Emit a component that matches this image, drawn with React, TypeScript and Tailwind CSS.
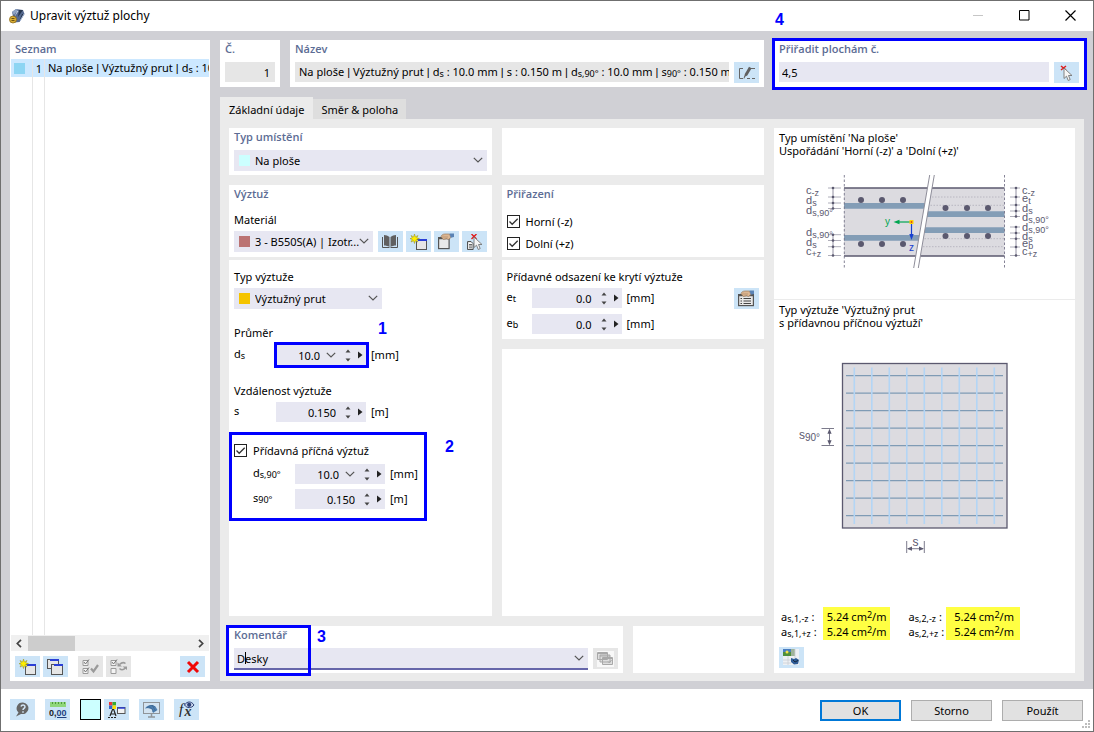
import { useState } from "react";
import type { ReactNode } from "react";

/* ---------- small drawings ---------- */

const Chevron = () => (
  <svg width="10" height="6" viewBox="0 0 10 6" fill="none" stroke="#555" strokeWidth="1.2">
    <path d="M.8.8 5 5 9.2.8" />
  </svg>
);

const AppLogo = () => (
  <svg width="16" height="16" viewBox="0 0 16 16">
    <path d="M3 4 7 1l7 1 1.500 4-5 8-5 .5z" fill="#55698f" />
    <path d="M3 4 7 1l2 1-4 5z" fill="#8ea3c4" />
    <path d="m10 2 4 0-5 7zM13 6l2 0-5 8z" fill="#27364f" />
    <path d="m8 3 1.500 0-4 6z" fill="#c6d2e6" />
    <circle cx="4" cy="11.500" r="3.500" fill="#d9ae35" stroke="#8b6a17" strokeWidth=".8" />
    <path d="M2.500 10.500h3M2.500 12.500h3" stroke="#6b5110" />
    <path d="M11 13 15 6" stroke="#a6b8d6" />
  </svg>
);

const Star = () => (
  <path
    d="M4.500 0 5.400 2.900 8 1.500 6.700 3.800 9.500 4.700 6.700 5.500 8 8 5.400 6.800 4.500 9.500 3.600 6.800 1 8 2.300 5.500 0 4.700 2.300 3.800 1 1.500 3.600 2.900z"
    fill="#ffee00"
    stroke="#8f8a1c"
    strokeWidth=".5"
  />
);

const NewIcon = () => (
  <svg width="17" height="16" viewBox="0 0 17 16">
    <rect x="6.500" y="5.500" width="10" height="10" fill="#e6e6e6" stroke="#555" />
    <rect x="8" y="5" width="9" height="2" fill="#2a3fd6" />
    <Star />
  </svg>
);

const CopyIcon = () => (
  <svg width="17" height="16" viewBox="0 0 17 16">
    <rect x=".5" y=".5" width="11" height="9" fill="#e6e6e6" stroke="#555" />
    <rect x="3" y="0" width="9" height="2" fill="#2a3fd6" />
    <rect x="4.500" y="5.500" width="11" height="10" fill="#e6e6e6" stroke="#555" />
    <rect x="7" y="5" width="9" height="2" fill="#2a3fd6" />
  </svg>
);

const CheckAllIcon = () => (
  <svg width="17" height="16" viewBox="0 0 17 16" fill="none" stroke="#9a9a9a">
    <path d="M1 1.500h5v5H1zM1 9.500h5v5H1z" fill="#f4f4f4" />
    <path d="m2 3 1.500 2L7 .5M2 11l1.500 2L7 8.500" stroke="#777" />
    <path d="m9 9.500 2.500 3L16 6" strokeWidth="2.200" />
  </svg>
);

const InvertIcon = () => (
  <svg width="17" height="16" viewBox="0 0 17 16" fill="none" stroke="#9a9a9a">
    <path d="M1 1.500h5v5H1zM1 9.500h5v5H1z" fill="#f4f4f4" />
    <path d="m2 3 1.500 2L7 .5" stroke="#777" />
    <path d="M15.500 4.500c-2-1.500-4-1-6 1M9.500 9.500c2 2 4 1.500 6-.500" strokeWidth="1.500" />
    <path d="M7.500 3.500v4H12zM17 11V7.500h-4.500z" fill="#9a9a9a" stroke="none" />
  </svg>
);

const DeleteIcon = () => (
  <svg width="14" height="14" viewBox="0 0 14 14" stroke="#f00808" strokeWidth="3">
    <path d="M2 2 12 12M12 2 2 12" />
  </svg>
);

const BookIcon = () => (
  <svg width="16" height="14" viewBox="0 0 16 14">
    <path d="M.5 2v10.500h7M15.500 2v10.500h-7" fill="none" stroke="#555" />
    <path d="M2 0c2 0 4 .8 5.500 2v10C6 11 4 10.500 2 10.500zM14 0c-2 0-4 .8-5.500 2v10c1.500-1 3.500-1.500 5.500-1.500z" fill="#606060" />
  </svg>
);

const EditIcon = ({ lines = false }: { lines?: boolean }) => (
  <svg width="17" height="17" viewBox="0 0 17 17">
    <rect x=".6" y="4.600" width={lines ? 14.800 : 10.500} height="11" fill="#e9e9e9" stroke="#555" strokeWidth="1.200" />
    <path d={lines ? "M1 5.500h14" : "M1 5.500h10"} stroke="#555" strokeWidth="1.500" />
    {lines && <path d="M2.500 8.500h1.500M5.500 8.500H13M2.500 11h1.500M5.500 11H13M2.500 13.500h1.500M5.500 13.500H13" stroke="#444" />}
    <path d="M3 3.500c.5-1.500 2-2.500 4-2.500h4.500l1.500 3.500-2.500 2-2-.8-3 .8-1.500-1.500z" fill="#dcb692" stroke="#8f6f52" strokeWidth=".6" />
    <path d="M5 2.500v3M7 3v2.500M9 3v2" stroke="#a98664" strokeWidth=".6" />
    <path d="M11.500.5H16v3.500l-3.200.8z" fill="#5b83b5" />
  </svg>
);

const Cursor = () => (
  <path d="M0 0v10.500l2.500-2.300L4.200 12.500l2-.9L4.500 7.500H8z" fill="#f6f6f6" stroke="#777" strokeWidth=".9" />
);

const PickIcon = () => (
  <svg width="13" height="16" viewBox="0 0 13 16">
    <path d="M1 1l5 4M6 1 1 5" stroke="#e01c1c" strokeWidth="1.500" />
    <g transform="translate(4 3)">
      <Cursor />
    </g>
  </svg>
);

const PickListIcon = () => (
  <svg width="17" height="16" viewBox="0 0 17 16">
    <path d="M1.600 7.600h3.500l2 2v6H1.600z" fill="#fafafa" stroke="#444" />
    <path d="M3 10.500h3M3 12h3M3 13.800h3" stroke="#444" strokeWidth=".8" />
    <path d="M5.500 0l5 5M10.500 0l-5 5" stroke="#e01c1c" strokeWidth="1.400" />
    <g transform="translate(8 3)">
      <Cursor />
    </g>
  </svg>
);

const RenameIcon = () => (
  <svg width="16" height="14" viewBox="0 0 16 14" fill="none" stroke="#666">
    <path d="M4 2.500H.5v10H4M8 12.500h3M13 12.500h3M12 2.500h4" />
    <path d="M5.200 11 5.800 8 10 .8l2.600 1.500L8.300 9.500z" fill="#606060" stroke="none" />
    <path d="m5 12.500.8-2.500" />
  </svg>
);

const StackIcon = () => (
  <svg width="17" height="16" viewBox="0 0 17 16">
    <rect width="17" height="16" fill="#f8f8f8" />
    <g fill="#dedede" stroke="#a8a8a8">
      <path d="M.5 1.500h10v7H.5zM3 4h10v7H3zM5.500 6.500h10v7h-10z" />
      <path d="M.5 2.500h10M3 5h10M5.500 7.500h10M11 10.500l1.500 1.500L14.500 9" fill="none" />
    </g>
  </svg>
);

const HelpIcon = () => (
  <svg width="15" height="15" viewBox="0 0 15 15">
    <path d="M8 .5a6 5.800 0 1 1-2 11.400L1 14.500l2.500-4A6 5.800 0 0 1 8 .5z" fill="#666" />
    <path d="M6 4.500c.5-2 4-2 4 .2C10 6.500 8 6.300 8 8M8 9.300v1.400" fill="none" stroke="#d4e6f7" strokeWidth="1.500" />
  </svg>
);

const UnitsIcon = () => (
  <svg width="18" height="16" viewBox="0 0 18 16">
    <rect x="1" y="0" width="16" height="5" fill="#8fd67a" />
    <path d="M3.500 0v2M6.500 0v2M9.500 0v2M12.500 0v2M15.500 0v2" stroke="#4f9a3c" />
    <text x="0" y="14" fontSize="9" fontWeight="700" fill="#222" fontFamily="Liberation Sans">0,</text>
    <text x="7.500" y="14" fontSize="9" fontWeight="700" fill="#1e3f80" fontFamily="Liberation Sans">00</text>
    <path d="M8 15.500h9.500" stroke="#1e3f80" />
  </svg>
);

const DisplayIcon = () => (
  <svg width="18" height="16" viewBox="0 0 18 16">
    <path d="M1 0h3.500v3.500H1z" fill="#e33" />
    <path d="M4.500 0H8v3.500H4.500z" fill="#3a3" />
    <path d="M1 3.500h3.500V7H1z" fill="#36c" />
    <path d="M4.500 3.500H8V7H4.500z" fill="#fd0" />
    <path d="M2 14 4.500 7.500h1.200L8 14M3 12h4" fill="none" stroke="#222" strokeWidth="1.200" />
    <path d="M0 15.500h9" stroke="#222" strokeDasharray="2 1" />
    <rect x="9.500" y="5.500" width="7.500" height="6" fill="#f2f2f2" stroke="#555" />
    <path d="M10 6h7" stroke="#2a3fd6" strokeWidth="1.500" />
  </svg>
);

const ViewIcon = () => (
  <svg width="17" height="16" viewBox="0 0 17 16">
    <rect x=".5" y=".5" width="16" height="11" fill="#d3e3f1" stroke="#8f9499" />
    <path d="M8.500 12v2.500M5 15h7" stroke="#8f9499" strokeWidth="1.500" />
    <path d="M2 6.500C4 3 9 1.500 12.500 4.500L14.500 8 10 11 9 7.500 5.500 6z" fill="#4f7fb0" />
    <path d="M4 6c2.500-3 6-3 8-1M5.500 6c3-1 4 .5 4.500 4M9 3l3.500 6" fill="none" stroke="#345f8c" strokeWidth=".6" />
  </svg>
);

const FormulaIcon = () => (
  <svg width="17" height="17" viewBox="0 0 17 17">
    <text x="1" y="13" fontSize="15" fontStyle="italic" fill="#222" fontFamily="Liberation Serif">f</text>
    <text x="6.500" y="15" fontSize="14" fontStyle="italic" fontWeight="700" fill="#333" fontFamily="Liberation Serif">x</text>
    <path d="M6.500 4c2.500-4 7-4 9.500 0-2.500 3.500-7 3.500-9.500 0z" fill="#c9d5ea" stroke="#2b3f78" />
    <circle cx="11.200" cy="3.800" r="2.100" fill="#2b3f78" />
  </svg>
);

const PictureIcon = () => (
  <svg width="17" height="17" viewBox="0 0 17 17">
    <rect width="16" height="16" fill="#eef1f4" />
    <rect width="8" height="7" fill="#4f8f3c" />
    <path d="M0 0h8v3H0z" fill="#4a7ec0" />
    <circle cx="4" cy="3" r="1.500" fill="#f4e04a" />
    <path d="M8 0h4v7H8z" fill="#9fb39a" />
    <path d="M0 11h16M0 14h8M5 7v9M12 0v9" stroke="#c9ced4" strokeWidth=".8" />
    <path d="M8 9l3 1 2-1 3 2-1 4-4 .5L8 13z" fill="#2e5c96" />
    <path d="m10 11 2 2 3-1.500" stroke="#14263f" fill="none" />
  </svg>
);

/* ---------- building blocks ---------- */

function IconButton({ label, muted = false, children }: { label: string; muted?: boolean; children: ReactNode }) {
  return (
    <button
      type="button"
      aria-label={label}
      disabled={muted}
      className={`flex h-[21px] w-[25px] shrink-0 items-center justify-center ${muted ? "bg-[#e6e6e6]" : "bg-[#cce4f7]"}`}
    >
      {children}
    </button>
  );
}

function Card({ title, className = "", children }: { title?: string; className?: string; children?: ReactNode }) {
  return (
    <section className={`relative bg-white px-[5px] ${className}`}>
      {title && <h2 className="h-[22px] font-['Open_Sans','Noto_Sans',sans-serif] text-[11px] leading-[18px] font-semibold text-[#5c6c94]">{title}</h2>}
      {children}
    </section>
  );
}

function Select({ id, label, value, swatch, className }: { id: string; label: string; value: string; swatch: string; className: string }) {
  return (
    <div className={`relative h-[21px] bg-[#e7e7f2] ${className}`}>
      <select id={id} aria-label={label} className="h-full w-full appearance-none bg-transparent pl-[21px] text-[11px] outline-none">
        <option>{value}</option>
      </select>
      <span className={`pointer-events-none absolute top-[5px] left-[5px] size-[11px] ${swatch}`} />
      <span className="pointer-events-none absolute top-[7px] right-1">
        <Chevron />
      </span>
    </div>
  );
}

function Spinner({ id, value, list = false, marked = false }: { id: string; value: string; list?: boolean; marked?: boolean }) {
  const [text, setText] = useState(value);
  return (
    <div className="relative flex h-5 w-[90px] items-center bg-[#e7e7f2]">
      <input
        id={id}
        value={text}
        onChange={(e) => setText(e.target.value)}
        className="h-full w-0 flex-1 bg-transparent text-right text-[11px] outline-none"
      />
      {list && (
        <button type="button" aria-label="Seznam hodnot" className="ml-1.5">
          <Chevron />
        </button>
      )}
      <span className="mr-[7px] ml-[9px] flex flex-col gap-[5px]">
        <button type="button" aria-label="Zvýšit">
          <svg className="block" width="6" height="4" viewBox="0 0 6 4" fill="#444"><path d="M3 .5 5.500 3.500h-5z" /></svg>
        </button>
        <button type="button" aria-label="Snížit">
          <svg className="block" width="6" height="4" viewBox="0 0 6 4" fill="#444"><path d="M3 3.500.5.500h5z" /></svg>
        </button>
      </span>
      <button type="button" aria-label="Další možnosti" className="mr-[3px]">
        <svg className="block" width="5" height="8" viewBox="0 0 5 8" fill="#222"><path d="M0 .5 4.500 4 0 7.500z" /></svg>
      </button>
      {marked && <span className="pointer-events-none absolute -inset-y-[3px] -right-[3px] -left-0.5 border-3 border-[#0000ff]" />}
    </div>
  );
}

function Field({ id, label, unit, value, list, marked, labelWidth = "w-[42px]" }: {
  id: string; label: ReactNode; unit: string; value: string; list?: boolean; marked?: boolean; labelWidth?: string;
}) {
  return (
    <div className="flex h-5">
      <label htmlFor={id} className={`leading-[18px] ${labelWidth}`}>{label}</label>
      <Spinner id={id} value={value} list={list} marked={marked} />
      <span className="ml-[5px] leading-[19px]">{unit}</span>
    </div>
  );
}

function Check({ id, children }: { id: string; children: ReactNode }) {
  return (
    <div className="flex items-center gap-1.5">
      <span className="relative size-[13px]">
        <input id={id} type="checkbox" defaultChecked className="peer block size-[13px] appearance-none border border-[#222] bg-white" />
        <svg className="pointer-events-none invisible absolute inset-0 peer-checked:visible" width="13" height="13" viewBox="0 0 13 13" fill="none" stroke="#333" strokeWidth="1.300">
          <path d="M2.500 6.500 5.200 9.300 10.700 3.800" />
        </svg>
      </span>
      <label htmlFor={id}>{children}</label>
    </div>
  );
}

const Sub = ({ children }: { children: ReactNode }) => <span className="relative top-px text-[9px] leading-none">{children}</span>;

const Bar = () => <span className="font-['Liberation_Sans',sans-serif]"> | </span>;

const Marker = ({ className, children }: { className: string; children: ReactNode }) => (
  <span className={`pointer-events-none absolute font-['Liberation_Sans',sans-serif] text-base leading-4 font-bold text-[#0000ff] ${className}`}>
    {children}
  </span>
);

/* ---------- diagrams ---------- */

function SvgLabel({ x, y, base, sub }: { x: number; y: number; base: string; sub: string }) {
  return (
    <text x={x} y={y} fontSize="11" fill="#5b596f" fontFamily="Liberation Sans">
      {base}
      <tspan dy="2" fontSize="9">{sub}</tspan>
    </text>
  );
}

function Dimension({ x, from, to, stops }: { x: number; from: number; to: number; stops: number[] }) {
  return (
    <g stroke="#77758a" strokeWidth=".8" fill="#5b596f">
      <path d={`M${x} ${stops[0]}V${stops[stops.length - 1]}`} />
      {stops.map((y) => (
        <g key={y}>
          <path d={`M${from} ${y}H${to}`} stroke="#9a99a8" />
          <circle cx={x} cy={y} r="1.300" stroke="none" />
        </g>
      ))}
    </g>
  );
}

function SectionDiagram() {
  const dots = [[861, 200], [882, 200], [903, 200], [861, 244], [882, 244], [903, 244], [945.5, 208], [967, 208], [988, 208], [945.5, 236], [967, 236], [988, 236]];
  return (
    <svg className="block w-full" viewBox="779 170 291 105" role="img" aria-label="Řez plochou s výztuží">
      <path d="M844 188H927.400L915.800 256H844zM932 188h72.500v68H920.400z" fill="#dcdbe0" />
      <path d="M844 203h80.800l-1 5.700H844zM844 235h75.300l-1 5.700H844zM928 211.200h76.500v5.700H927zM925.300 227.200h79.200v5.700H924.300z" fill="#839db6" />
      <path d="M932 197h72M930.500 205.300h74M924.500 238.700h80M923 246.700h81" stroke="#b4b3bd" strokeWidth=".9" strokeDasharray="1.500 1.500" />
      <path d="M844 188H927.400M932 188h72.500M844 256h71.800M920.400 256h84.100" stroke="#5b596f" strokeWidth="1.500" />
      <path d="M844.300 175v93M1004.500 175v93" stroke="#77758a" strokeWidth=".9" strokeDasharray="2.500 2" />
      <path d="M929.700 175 913.700 268M934.300 175 918.300 268" stroke="#8e8d99" />
      {dots.map(([x, y]) => (
        <circle key={`${x}-${y}`} cx={x} cy={y} r="3" fill="#5b596f" />
      ))}
      <path d="M911.500 222H898" stroke="#00a550" strokeWidth="1.200" />
      <path d="M893.500 222l6-2.200v4.400z" fill="#00a550" />
      <path d="M911.500 222v13" stroke="#1740d0" strokeWidth="1.200" />
      <path d="M911.500 240l-2.200-6h4.400z" fill="#1740d0" />
      <rect x="909.500" y="220" width="4" height="4" fill="#ffd400" />
      <circle cx="911.500" cy="222" r=".9" fill="#e03a1c" />
      <text x="885" y="225" fontSize="10" fill="#00a550" fontFamily="Liberation Sans">y</text>
      <text x="909" y="251" fontSize="10" fill="#1740d0" fontFamily="Liberation Sans">z</text>
      <Dimension x={833} from={828} to={841} stops={[188, 197, 203, 208.5]} />
      <Dimension x={833} from={828} to={841} stops={[234.7, 240.5, 246.7, 255.5]} />
      <Dimension x={1016} from={1010} to={1020} stops={[188, 197, 205, 211, 216.5]} />
      <Dimension x={1016} from={1010} to={1020} stops={[227, 233, 238.7, 247, 255.5]} />
      <SvgLabel x={806} y={194} base="c" sub="-z" />
      <SvgLabel x={806} y={204} base="d" sub="s" />
      <SvgLabel x={806} y={214} base="d" sub="s,90°" />
      <SvgLabel x={806} y={236} base="d" sub="s,90°" />
      <SvgLabel x={806} y={246} base="d" sub="s" />
      <SvgLabel x={806} y={255} base="c" sub="+z" />
      <SvgLabel x={1022} y={194} base="c" sub="-z" />
      <SvgLabel x={1022} y={202} base="e" sub="t" />
      <SvgLabel x={1022} y={212} base="d" sub="s" />
      <SvgLabel x={1022} y={221} base="d" sub="s,90°" />
      <SvgLabel x={1022} y={231} base="d" sub="s,90°" />
      <SvgLabel x={1022} y={240} base="d" sub="s" />
      <SvgLabel x={1022} y={247} base="e" sub="b" />
      <SvgLabel x={1022} y={255} base="c" sub="+z" />
    </svg>
  );
}

function GridDiagram() {
  const steps = [0, 1, 2, 3, 4, 5, 6, 7, 8];
  return (
    <svg className="block w-full" viewBox="779 355 291 204" role="img" aria-label="Půdorys výztužné sítě">
      <rect x="842.500" y="363.500" width="164.500" height="164.500" fill="#dcdbe0" stroke="#5b596f" strokeWidth="1.300" />
      {steps.map((i) => (
        <path key={i} d={`M846 ${375.7 + i * 17.5}H1003`} stroke="#7f9bb5" strokeWidth="1.300" />
      ))}
      {steps.map((i) => (
        <path key={i} d={`M${854.3 + i * 17.5} 367.500V524`} stroke="#b3d5f5" strokeWidth="1.600" />
      ))}
      <g stroke="#5b596f" strokeWidth=".8" fill="#5b596f">
        <path d="M821.500 428.500H834M821.500 445.500H834M829.500 430v14M906.700 541v12M924.300 541v12M908 548.700h15" />
        <path d="M829.500 428.700l2.100 5h-4.200zM829.500 445.300l2.100-5h-4.200zM907 548.700l5-2.100v4.200zM924 548.700l-5-2.100v4.200z" stroke="none" />
      </g>
      <text x="799" y="439" fontSize="12" fill="#5b596f" fontFamily="Liberation Sans">
        s<tspan dy="2" fontSize="10">90°</tspan>
      </text>
      <text x="912.500" y="546" fontSize="12" fill="#5b596f" fontFamily="Liberation Sans">s</text>
    </svg>
  );
}

function Results({ index, pad, gap }: { index: string; pad: string; gap: string }) {
  return (
    <div className={`flex ${gap}`}>
      <div className="pt-0.5">
        <div>a<Sub>s,{index},-z</Sub> :</div>
        <div>a<Sub>s,{index},+z</Sub> :</div>
      </div>
      <div className={`bg-[#ffff43] pt-0.5 pb-px ${pad}`}>
        <div>5.24 cm<span className="relative -top-[3px] text-[9px] leading-none">2</span>/m</div>
        <div>5.24 cm<span className="relative -top-[3px] text-[9px] leading-none">2</span>/m</div>
      </div>
    </div>
  );
}

/* ---------- dialog ---------- */

export default function App() {
  const [surfaces, setSurfaces] = useState("4,5");
  const [comment, setComment] = useState("Desky");
  return (
    <div className="flex min-h-screen flex-col border border-[#6f6f6f] bg-white font-['Noto_Sans','Open_Sans',sans-serif] text-[11px] leading-[15px] text-black">
      <header className="flex h-[30px] shrink-0 items-center pr-[17px] pl-2">
        <AppLogo />
        <h1 className="ml-[5px] flex-1 text-xs">Upravit výztuž plochy</h1>
        <div className="-mt-0.5 flex items-center gap-[35px]">
          <button type="button" aria-label="Minimalizovat">
            <svg width="11" height="11" viewBox="0 0 11 11" stroke="#c6c6c6"><path d="M0 5.500h10" /></svg>
          </button>
          <button type="button" aria-label="Maximalizovat">
            <svg width="11" height="11" viewBox="0 0 11 11" fill="none" stroke="#000"><path d="M.5.5h9.500v9.500H.5z" /></svg>
          </button>
          <button type="button" aria-label="Zavřít">
            <svg width="11" height="11" viewBox="0 0 11 11" stroke="#000" strokeWidth="1.200"><path d="M.5.5l10 10M10.500.5l-10 10" /></svg>
          </button>
        </div>
      </header>

      <main className="flex flex-1 gap-2.5 bg-[#d0d0d5] px-[9px] pt-[9px] pb-2">
        <aside className="flex w-[200px] shrink-0 flex-col bg-white px-px">
          <h2 className="h-[19px] pl-1 font-['Open_Sans','Noto_Sans',sans-serif] leading-[18px] font-semibold text-[#5c6c94]">Seznam</h2>
          <div className="flex flex-1 flex-col">
            <button type="button" className="flex h-[18px] shrink-0 items-center overflow-hidden bg-[#cce8ff] text-left whitespace-nowrap">
              <span className="flex h-full w-[22px] shrink-0 items-center border-r border-[#e6e6e6] pl-[3px]">
                <span className="size-[11px] bg-[#8dd5f3]" />
              </span>
              <span className="h-full w-3 shrink-0 border-r border-[#e6e6e6] pr-0.5 text-right leading-5">1</span>
              <span className="pl-[3px] leading-5">
                Na ploše<Bar />Výztužný prut<Bar />d<Sub>s</Sub> : 10
              </span>
            </button>
            <div className="flex flex-1">
              <span className="w-[22px] border-r border-[#e6e6e6]" />
              <span className="w-3 border-r border-[#e6e6e6]" />
            </div>
          </div>
          <div className="flex h-4 items-center justify-between bg-[#f0f0f0]">
            <button type="button" aria-label="Posunout vlevo" className="w-[17px] pl-[5px]">
              <svg width="6" height="9" viewBox="0 0 6 9" fill="none" stroke="#444" strokeWidth="1.700"><path d="M5 .8 1.300 4.500 5 8.200" /></svg>
            </button>
            <span className="mr-auto h-[15px] w-[47px] bg-[#cdcdcd]" />
            <button type="button" aria-label="Posunout vpravo" className="w-[17px] pl-1.5">
              <svg width="6" height="9" viewBox="0 0 6 9" fill="none" stroke="#444" strokeWidth="1.700"><path d="M1 .8 4.700 4.500 1 8.200" /></svg>
            </button>
          </div>
          <div className="flex gap-[3px] px-1 pt-[5px] pb-1">
            <IconButton label="Nový"><NewIcon /></IconButton>
            <IconButton label="Kopírovat"><CopyIcon /></IconButton>
            <span className="w-1" />
            <IconButton label="Vybrat vše" muted><CheckAllIcon /></IconButton>
            <IconButton label="Obrátit výběr" muted><InvertIcon /></IconButton>
            <span className="flex-1" />
            <IconButton label="Smazat"><DeleteIcon /></IconButton>
          </div>
        </aside>

        <div className="flex min-w-0 flex-1 flex-col">
          <div className="flex gap-2.5">
            <Card title="Č." className="w-[60px] pb-[5px]">
              <input aria-label="Č." readOnly value="1" className="h-5 w-full bg-[#e6e6e6] pr-[5px] text-right" />
            </Card>
            <Card title="Název" className="min-w-0 flex-1 pb-1">
              <div className="flex gap-[5px]">
                <div className="h-5 min-w-0 flex-1 bg-[#e6e6e6] pl-1">
                  <div className="overflow-hidden leading-5 whitespace-nowrap">
                    Na ploše<Bar />Výztužný prut<Bar />d<Sub>s</Sub> : 10.0 mm<Bar />s : 0.150 m<Bar />d<Sub>s,90°</Sub> : 10.0 mm<Bar />s<Sub>90°</Sub> : 0.150 m<Bar />H
                  </div>
                </div>
                <IconButton label="Upravit název"><RenameIcon /></IconButton>
              </div>
            </Card>
            <Card title="Přiřadit plochám č." className="w-[310px] pb-1">
              <div className="flex gap-[5px]">
                <input
                  aria-label="Přiřadit plochám č."
                  value={surfaces}
                  onChange={(e) => setSurfaces(e.target.value)}
                  className="h-5 min-w-0 flex-1 bg-[#e7e7f2] pl-[3px] outline-none"
                />
                <IconButton label="Vybrat plochy"><PickIcon /></IconButton>
              </div>
              <span className="pointer-events-none absolute -top-0.5 -right-[3px] -bottom-[3px] -left-0.5 border-3 border-[#0000ff]" />
              <Marker className="-top-7 left-px">4</Marker>
            </Card>
          </div>

          <div className="mt-2.5 flex items-end" role="tablist">
            <button type="button" role="tab" aria-selected="true" className="h-[22px] bg-[#ebebeb] px-[9px] pt-0.5">Základní údaje</button>
            <button type="button" role="tab" aria-selected="false" className="h-5 bg-[#dedede] px-2">Směr &amp; poloha</button>
          </div>

          <div className="grid flex-1 grid-cols-[535fr_301fr] gap-2.5 bg-[#ebebeb] px-[9px] pt-[9px] pb-2">
            <div className="flex flex-col gap-2.5">
              <div className="grid flex-1 grid-cols-2 gap-2.5">
                <div className="flex flex-col">
                  <Card title="Typ umístění" className="pb-1">
                    <Select id="placement" label="Typ umístění" value="Na ploše" swatch="bg-[#ccffff]" className="w-full" />
                  </Card>
                  <Card title="Výztuž" className="mt-2.5 pb-[5px]">
                    <label htmlFor="material" className="block h-6 leading-[26px]">Materiál</label>
                    <div className="flex gap-[3px]">
                      <Select id="material" label="Materiál" value="3 - B550S(A) | Izotr..." swatch="bg-[#bb7373]" className="mr-0.5 min-w-0 flex-1" />
                      <IconButton label="Knihovna materiálů"><BookIcon /></IconButton>
                      <IconButton label="Nový materiál"><NewIcon /></IconButton>
                      <IconButton label="Upravit materiál"><EditIcon /></IconButton>
                      <IconButton label="Vybrat materiál"><PickListIcon /></IconButton>
                    </div>
                  </Card>
                  <Card className="mt-[3px] flex-1 pt-1 pb-5">
                    <label htmlFor="kind" className="block h-6 leading-[26px]">Typ výztuže</label>
                    <Select id="kind" label="Typ výztuže" value="Výztužný prut" swatch="bg-[#f5c400]" className="w-[148px]" />
                    <div className="relative mt-3">
                      <h3 className="h-6 leading-6">Průměr</h3>
                      <Field id="ds" label={<>d<Sub>s</Sub></>} unit="[mm]" value="10.0" list marked />
                      <Marker className="top-0 left-36">1</Marker>
                    </div>
                    <div className="mt-[13px]">
                      <h3 className="h-6 leading-[26px]">Vzdálenost výztuže</h3>
                      <Field id="s" label="s" unit="[m]" value="0.150" />
                    </div>
                    <div className="relative mt-[19px]">
                      <div className="flex h-[19px] items-center">
                        <Check id="extra">Přídavná příčná výztuž</Check>
                      </div>
                      <div className="mt-1 flex flex-col gap-[5px] pl-[19px]">
                        <Field id="ds90" label={<>d<Sub>s,90°</Sub></>} unit="[mm]" value="10.0" list />
                        <Field id="s90" label={<>s<Sub>90°</Sub></>} unit="[m]" value="0.150" />
                      </div>
                      <span className="pointer-events-none absolute -top-[9px] -bottom-3 -left-[5px] w-[198px] border-3 border-[#0000ff]" />
                      <Marker className="-top-0.5 left-[211px]">2</Marker>
                    </div>
                  </Card>
                </div>

                <div className="flex flex-col">
                  <Card className="h-[47px]" />
                  <Card title="Přiřazení" className="mt-2.5 h-[72px]">
                    <div className="flex flex-col gap-[7px] pt-[7px]">
                      <Check id="top">Horní (-z)</Check>
                      <Check id="bottom">Dolní (+z)</Check>
                    </div>
                  </Card>
                  <Card className="mt-[3px] pt-1 pb-[5px]">
                    <h3 className="h-6 leading-[26px]">Přídavné odsazení ke krytí výztuže</h3>
                    <div className="flex items-start justify-between">
                      <div className="flex flex-col gap-1.5">
                        <Field id="et" label={<>e<Sub>t</Sub></>} unit="[mm]" value="0.0" labelWidth="w-[25px]" />
                        <Field id="eb" label={<>e<Sub>b</Sub></>} unit="[mm]" value="0.0" labelWidth="w-[25px]" />
                      </div>
                      <IconButton label="Upravit krytí"><EditIcon lines /></IconButton>
                    </div>
                  </Card>
                  <Card className="mt-2.5 flex-1" />
                </div>
              </div>

              <div className="grid grid-cols-[3fr_1fr] gap-2.5">
                <Card title="Komentář" className="pb-[3px]">
                  <div className="flex gap-[5px]">
                    <div className="relative flex h-[22px] flex-1 items-center border-b-2 border-[#6666aa] bg-[#e7e7f2] pr-1">
                      <input
                        aria-label="Komentář"
                        value={comment}
                        onChange={(e) => setComment(e.target.value)}
                        className="h-full min-w-0 flex-1 bg-transparent pl-[3px] outline-none"
                      />
                      <span className="absolute top-1 left-[11px] h-3 w-px bg-black" />
                      <button type="button" aria-label="Seznam komentářů"><Chevron /></button>
                    </div>
                    <IconButton label="Uložené komentáře" muted><StackIcon /></IconButton>
                  </div>
                  <span className="pointer-events-none absolute -top-px -bottom-[3px] -left-[3px] w-[85px] border-3 border-[#0000ff]" />
                  <Marker className="top-[3px] left-[88px]">3</Marker>
                </Card>
                <Card />
              </div>
            </div>

            <section className="flex flex-col bg-white pt-[3px] pb-[5px]">
              <p className="px-[5px] leading-[13px]">Typ umístění 'Na ploše'<br />Uspořádání 'Horní (-z)' a 'Dolní (+z)'</p>
              <div className="mt-[13px] px-[5px]"><SectionDiagram /></div>
              <hr className="mt-6 border-t border-[#ebebeb]" />
              <p className="mt-[3px] px-[5px] leading-[13px]">Typ výztuže 'Výztužný prut<br />s přídavnou příčnou výztuží'</p>
              <div className="mt-[26px] px-[5px]"><GridDiagram /></div>
              <div className="mt-auto flex gap-[18px] px-[7px]">
                <Results index="1" pad="px-1" gap="gap-1.5" />
                <Results index="2" pad="pl-2 pr-1.5" gap="gap-0.5" />
              </div>
              <div className="mt-[7px] px-[5px]">
                <IconButton label="Nastavení obrázku"><PictureIcon /></IconButton>
              </div>
            </section>
          </div>
        </div>
      </main>

      <footer className="relative flex h-[42px] shrink-0 items-start gap-2.5 pt-2.5 pr-2.5 pl-[9px]">
        <IconButton label="Nápověda"><HelpIcon /></IconButton>
        <IconButton label="Jednotky a desetinná místa"><UnitsIcon /></IconButton>
        <div className="flex gap-[3px]">
          <button type="button" aria-label="Barva" className="size-[21px] border border-black bg-[#ccffff]" />
          <IconButton label="Zobrazení"><DisplayIcon /></IconButton>
        </div>
        <IconButton label="Pohled"><ViewIcon /></IconButton>
        <IconButton label="Vzorce"><FormulaIcon /></IconButton>
        <div className="mt-px ml-auto flex gap-2.5">
          <button type="button" className="h-[21px] w-[81px] border-2 border-[#0078d7] bg-[#e1e1e1]">OK</button>
          <button type="button" className="h-[21px] w-[81px] border border-[#adadad] bg-[#e1e1e1]">Storno</button>
          <button type="button" className="h-[21px] w-[81px] border border-[#adadad] bg-[#e1e1e1]">Použít</button>
        </div>
        <svg className="absolute right-0.5 bottom-0.5" width="9" height="9" viewBox="0 0 9 9" fill="#bdbdbd">
          <path d="M6 0h2v2H6zM3 3h2v2H3zM6 3h2v2H6zM0 6h2v2H0zM3 6h2v2H3zM6 6h2v2H6z" />
        </svg>
      </footer>
    </div>
  );
}
